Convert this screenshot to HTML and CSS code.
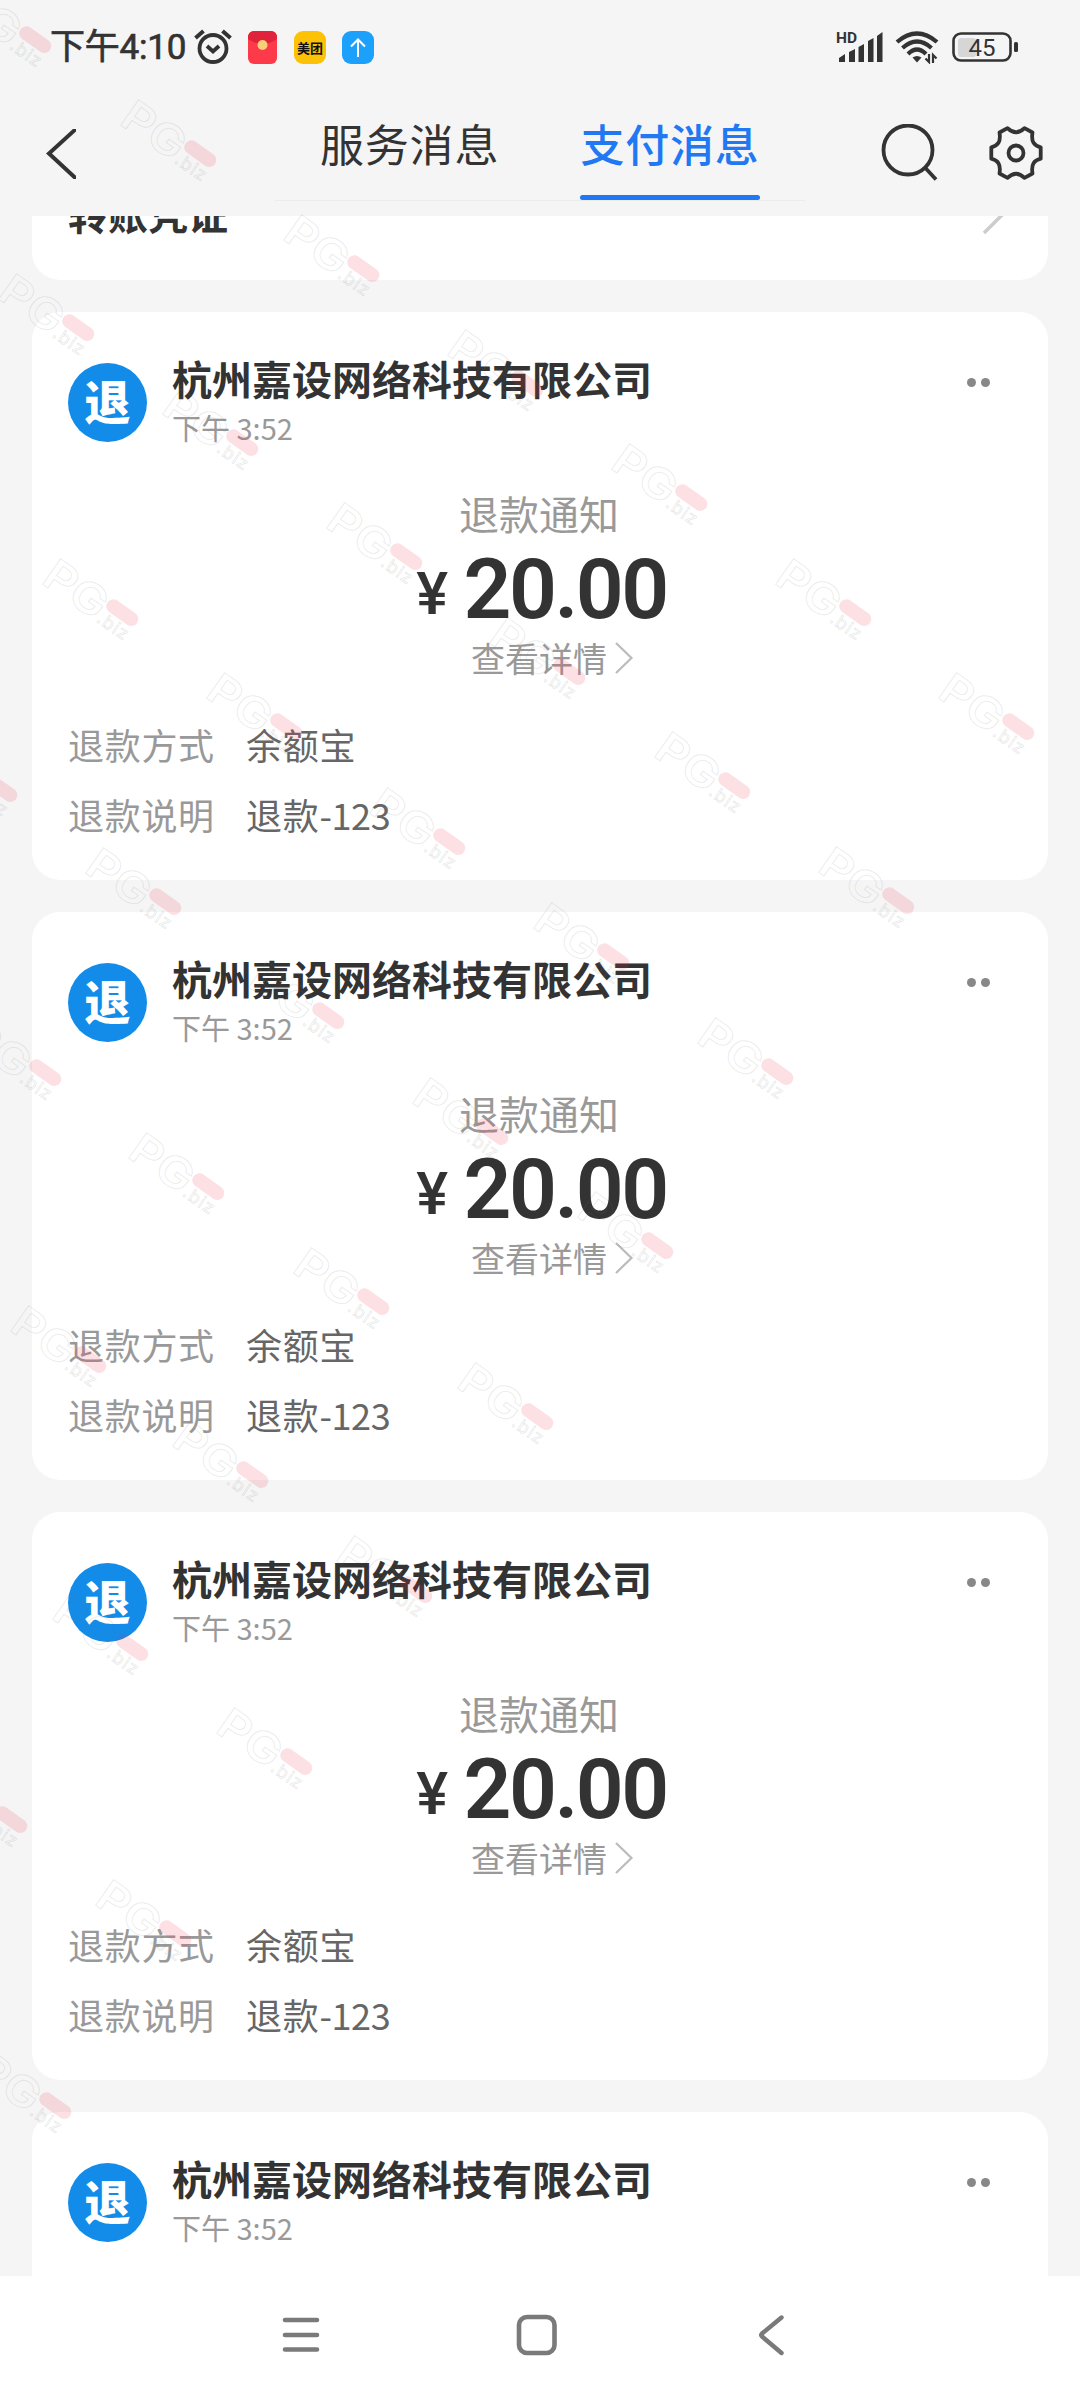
FILE: index.html
```html
<!DOCTYPE html>
<html lang="zh-CN">
<head>
<meta charset="utf-8">
<title>支付消息</title>
<link rel="stylesheet" href="styles.css">
</head>
<body>
<div class="screen">
  <div class="statusbar">
    <span class="clock">下午4:10</span>
    <svg class="alarm" width="38" height="36" viewBox="0 0 38 36" fill="none" stroke="#333" stroke-width="3.8"><circle cx="19" cy="19.5" r="13.5"/><path d="M13 17l6 5.5 6-5.5"/><path d="M1.5 9l8-7M36.500 9l-8-7" stroke-width="4"/></svg>
    <svg class="app packet" width="29" height="33" viewBox="0 0 29 33"><rect width="29" height="33" rx="6" fill="#fd3a4a"/><path d="M0 8V6a6 6 0 0 1 6-6h17a6 6 0 0 1 6 6v2Q14.500 18 0 8z" fill="#e0223a"/><circle cx="14.500" cy="14" r="5" fill="#f8ce78"/></svg>
    <span class="app meituan">美团</span>
    <svg class="app upload" width="32" height="33" viewBox="0 0 32 33"><rect width="32" height="33" rx="9" fill="#1ba0fb"/><path d="M16 26V9M9 15.500L16 8.500l7 7" fill="none" stroke="#fff" stroke-width="2"/></svg>
    <svg class="signal" width="48" height="34" viewBox="0 0 48 34" fill="#333"><text x="0" y="13" class="hd">HD</text><path d="M3 32v-4l6-4v8zM13 32V22l6-3v13zM22.500 32V17l5.500-3v18zM32 32V11l5.500-3v24zM41 32V6l5.500-4v30z"/></svg>
    <svg class="wifi" width="44" height="34" viewBox="0 0 44 34" fill="none" stroke="#333" stroke-width="4.200"><path d="M2 12Q22-5 42 12M7.500 18Q22 5 36.500 18M13 24Q22 15 31 24"/><path d="M17.500 27.500Q22 24.500 26.500 27.500L22 32.500z" fill="#333" stroke="none"/><path d="M34 24v8l-3.500-3.500M38 33v-8l3.500 3.500" stroke-width="2.200"/></svg>
    <svg class="battery" width="67" height="31" viewBox="0 0 67 31"><rect x="6" y="6" width="18" height="19" rx="3" fill="#d6d6d6"/><rect x="1.500" y="1.500" width="57" height="27" rx="7.500" fill="none" stroke="#333" stroke-width="2.600"/><rect x="62" y="10" width="4" height="10" rx="1.500" fill="#333"/><text x="30" y="23.500" class="level">45</text></svg>
  </div>

  <div class="header">
    <svg class="back" width="30" height="50" viewBox="0 0 30 50"><path d="M31-1L3 24.500l28 26" fill="none" stroke="#333" stroke-width="4"/></svg>
    <div class="tabs">
      <div class="tab">服务消息</div>
      <div class="tab active">支付消息</div>
    </div>
    <svg class="search" width="58" height="60" viewBox="0 0 58 60" fill="none" stroke="#333" stroke-width="3.800"><circle cx="27" cy="26" r="24.500"/><path d="M43.500 43L55 55.500"/></svg>
    <svg class="gear" width="54" height="54" viewBox="0 0 54 54" fill="none" stroke="#333" stroke-width="3.800" stroke-linejoin="round"><path d="M18.500 2.200Q27 10.500 35.500 2.200L43.500 6.500C42 16 45 19.500 51.700 21.300V32.700C45 34.500 42 38 43.500 47.500L35.500 51.800Q27 43.500 18.500 51.800L10.500 47.500C12 38 9 34.500 2.300 32.700V21.300C9 19.500 12 16 10.500 6.500z"/><circle cx="27" cy="27" r="7.500"/></svg>
  </div>

  <div class="feed">
    <div class="card voucher">
      <div class="voucher-title">转账凭证</div>
      <svg class="voucher-arrow" width="24" height="40" viewBox="0 0 24 40"><path d="M2 2l18 18L2 38" fill="none" stroke="#ccc" stroke-width="3.500"/></svg>
    </div>
    <div class="card">
      <div class="top"><div class="avatar">退</div><div class="who"><div class="company">杭州嘉设网络科技有限公司</div><div class="time">下午 3:52</div></div><div class="more"><i></i><i></i></div></div>
      <div class="notice">退款通知</div>
      <div class="amount"><span class="yen">¥</span><span>20.00</span></div>
      <div class="detail">查看详情<svg width="20" height="32" viewBox="0 0 20 32"><path d="M2 1l15.500 15L2 31" fill="none" stroke="#bbb" stroke-width="2.200"/></svg></div>
      <div class="row"><span class="label">退款方式</span><span>余额宝</span></div>
      <div class="row"><span class="label">退款说明</span><span>退款<span class="num">-123</span></span></div>
    </div>
    <div class="card">
      <div class="top"><div class="avatar">退</div><div class="who"><div class="company">杭州嘉设网络科技有限公司</div><div class="time">下午 3:52</div></div><div class="more"><i></i><i></i></div></div>
      <div class="notice">退款通知</div>
      <div class="amount"><span class="yen">¥</span><span>20.00</span></div>
      <div class="detail">查看详情<svg width="20" height="32" viewBox="0 0 20 32"><path d="M2 1l15.500 15L2 31" fill="none" stroke="#bbb" stroke-width="2.200"/></svg></div>
      <div class="row"><span class="label">退款方式</span><span>余额宝</span></div>
      <div class="row"><span class="label">退款说明</span><span>退款<span class="num">-123</span></span></div>
    </div>
    <div class="card">
      <div class="top"><div class="avatar">退</div><div class="who"><div class="company">杭州嘉设网络科技有限公司</div><div class="time">下午 3:52</div></div><div class="more"><i></i><i></i></div></div>
      <div class="notice">退款通知</div>
      <div class="amount"><span class="yen">¥</span><span>20.00</span></div>
      <div class="detail">查看详情<svg width="20" height="32" viewBox="0 0 20 32"><path d="M2 1l15.500 15L2 31" fill="none" stroke="#bbb" stroke-width="2.200"/></svg></div>
      <div class="row"><span class="label">退款方式</span><span>余额宝</span></div>
      <div class="row"><span class="label">退款说明</span><span>退款<span class="num">-123</span></span></div>
    </div>
    <div class="card last">
      <div class="top"><div class="avatar">退</div><div class="who"><div class="company">杭州嘉设网络科技有限公司</div><div class="time">下午 3:52</div></div><div class="more"><i></i><i></i></div></div>
    </div>
  </div>

  <div class="navbar">
    <svg width="38" height="42" viewBox="0 0 38 42" fill="none" stroke="#7a7a7a" stroke-width="4.600" stroke-linecap="round"><path d="M3 6h32M3 21h32M3 35.500h32"/></svg>
    <svg width="42" height="42" viewBox="0 0 42 42" fill="none" stroke="#7a7a7a" stroke-width="4.600"><rect x="3" y="3" width="35.500" height="36" rx="8"/></svg>
    <svg width="30" height="42" viewBox="0 0 30 42" fill="none" stroke="#7a7a7a" stroke-width="4.400" stroke-linecap="round" stroke-linejoin="round"><path d="M24.500 3.500L5 19.500q-1.500 1.500 0 3L24.500 39"/></svg>
  </div>

  <svg class="marks" width="1080" height="2400" viewBox="0 0 1080 2400">
    <defs>
      <g id="mark"><g transform="rotate(35)"><text class="pg" x="-85" y="22" textLength="68" lengthAdjust="spacingAndGlyphs">PG</text><text class="biz" x="-17" y="22" textLength="34">.biz</text><rect x="-18" y="-7.500" width="36" height="14" rx="7" fill="#e8304a" fill-opacity=".15"/></g></g>
    </defs>
    <use href="#mark" x="35" y="40"/><use href="#mark" x="200" y="154"/><use href="#mark" x="363" y="269"/><use href="#mark" x="527" y="384"/><use href="#mark" x="691" y="498"/><use href="#mark" x="855" y="613"/><use href="#mark" x="1018" y="727"/>
    <use href="#mark" x="78" y="328"/><use href="#mark" x="242" y="443"/><use href="#mark" x="406" y="557"/><use href="#mark" x="569" y="672"/><use href="#mark" x="734" y="786"/><use href="#mark" x="898" y="901"/>
    <use href="#mark" x="122" y="613"/><use href="#mark" x="286" y="727"/><use href="#mark" x="449" y="842"/><use href="#mark" x="613" y="957"/><use href="#mark" x="777" y="1072"/>
    <use href="#mark" x="1" y="789"/><use href="#mark" x="165" y="902"/><use href="#mark" x="328" y="1016"/><use href="#mark" x="492" y="1132"/><use href="#mark" x="657" y="1246"/>
    <use href="#mark" x="45" y="1073"/><use href="#mark" x="208" y="1187"/><use href="#mark" x="373" y="1302"/><use href="#mark" x="537" y="1417"/>
    <use href="#mark" x="90" y="1360"/><use href="#mark" x="252" y="1475"/><use href="#mark" x="416" y="1590"/>
    <use href="#mark" x="132" y="1648"/><use href="#mark" x="296" y="1762"/>
    <use href="#mark" x="11" y="1820"/><use href="#mark" x="175" y="1934"/><use href="#mark" x="55" y="2106"/>
  </svg>
</div>
</body>
</html>
```
FILE: styles.css
```css
* { box-sizing: border-box; }
body { margin: 0; background: #f5f5f5; font-family: "Noto Sans CJK SC", sans-serif; color: #333; }
svg { display: block; flex: none; }
.screen { position: relative; width: 1080px; height: 2400px; overflow: hidden; display: flex; flex-direction: column; }

.statusbar { height: 92px; padding: 2px 0 0 50px; display: flex; align-items: center; flex: none; }
.clock { width: 138px; font: 400 35px/40px Roboto, "Noto Sans CJK SC", sans-serif; letter-spacing: -.2px; -webkit-text-stroke: .7px #333; white-space: nowrap; padding-top: 1px; }
.alarm { margin-left: 6px; }
.packet { margin-left: 16px; }
.meituan { width: 32px; height: 33px; margin-left: 17px; border-radius: 9px; background: #fdc106; color: #111; font-size: 13px; font-weight: 700; line-height: 33px; text-align: center; white-space: nowrap; }
.upload { margin-left: 16px; }
.signal { margin-left: auto; }
.hd { font: 700 15.500px Roboto, sans-serif; }
.wifi { margin-left: 11px; }
.battery { margin: 0 61px 0 13px; }
.level { font: 400 24px Roboto, sans-serif; fill: #333; text-anchor: middle; }

.header { height: 124px; display: flex; align-items: flex-start; padding-left: 46px; flex: none; }
.back { margin-top: 37px; }
.tabs { margin-left: 199px; width: 530px; height: 109px; border-bottom: 1px solid #ebebeb; padding: 0 45px; display: flex; justify-content: space-between; }
.tab { width: 180px; height: 108px; padding-top: 19px; font-size: 44px; letter-spacing: .8px; line-height: 64px; text-align: center; white-space: nowrap; border-bottom: 5px solid transparent; }
.tab:first-child { padding-right: 4px; }
.active { color: #2178f3; font-weight: 500; position: relative; }
.active::after { content: ""; position: absolute; left: 0; bottom: -5px; width: 180px; height: 5px; border-radius: 3px; background: #2178f3; }
.search { margin: 32px 0 0 76px; }
.gear { margin: 34px 0 0 50px; }

.feed { height: 2060px; flex: none; overflow: hidden; padding: 0 32px; display: flex; flex-direction: column; gap: 32px; }
.card { height: 568px; flex: none; background: #fff; border-radius: 28px; padding: 36px; }
.voucher { height: 64px; border-radius: 0 0 28px 28px; padding: 0 42px 0 36px; display: flex; justify-content: space-between; }
.voucher-title { font-size: 40px; font-weight: 700; line-height: 60px; margin-top: -33px; height: 60px; }
.voucher-arrow { margin-top: -21px; }
.last { border-radius: 28px 28px 0 0; }
.top { display: flex; height: 122px; }
.avatar { width: 79px; height: 79px; margin-top: 15px; border-radius: 50%; background: #138be8; color: #fff; font-size: 46px; font-weight: 900; line-height: 73px; text-align: center; }
.who { margin-left: 25px; }
.company { margin-top: 6px; font-size: 40px; font-weight: 700; line-height: 48px; }
.time { margin-top: 8px; font-size: 29px; line-height: 34px; color: #999; }
.more { margin: 30px 22px 0 auto; display: flex; gap: 5px; }
.more i { width: 9px; height: 9px; border-radius: 50%; background: #888; }
.notice { margin-top: 14px; height: 60px; padding-right: 2px; font-size: 40px; line-height: 58px; text-align: center; color: #999; }
.amount { height: 86px; padding: 3px 0 0 3px; display: flex; justify-content: center; align-items: baseline; gap: 18px; font: 600 84px/86px Roboto, sans-serif; letter-spacing: -2.500px; }
.yen { font-size: 60px; font-weight: 500; position: relative; top: -4px; }
.detail { margin-top: 3px; height: 50px; display: flex; align-items: center; gap: 7px; padding-left: 403px; font-size: 34px; line-height: 50px; color: #999; }
.row { height: 70px; display: flex; align-items: center; font-size: 36px; letter-spacing: .7px; line-height: 50px; color: #666; }
.num { letter-spacing: -.4px; }
.detail + .row { margin-top: 26px; }
.label { width: 178px; color: #999; }

.navbar { flex: 1; background: #fff; display: flex; padding: 38px 0 0 282px; }
.navbar svg + svg { margin-left: 196px; }
.navbar svg:last-child { margin-left: 199px; }

.marks { position: absolute; left: 0; top: 0; }
.pg { font: 600 43px Inter, sans-serif; fill: none; stroke: #777; stroke-opacity: .15; stroke-width: 1; }
.biz { font: 400 18px Inter, sans-serif; fill: none; stroke: #777; stroke-opacity: .18; stroke-width: .8; }
```
